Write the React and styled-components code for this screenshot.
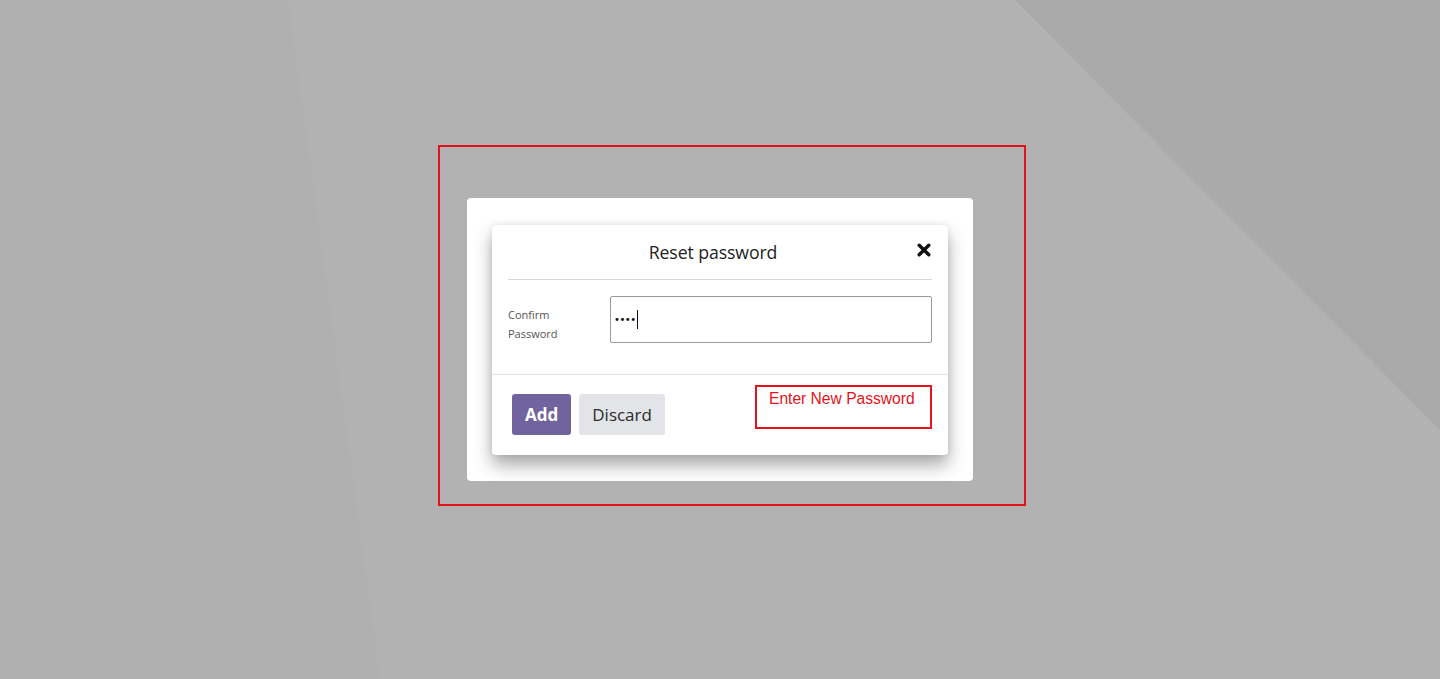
import React from 'react';
import styled, { createGlobalStyle } from 'styled-components';

const GlobalStyle = createGlobalStyle`
  html, body {
    margin: 0;
    padding: 0;
    height: 100%;
  }
  body {
    background: #b2b2b2;
    font-family: "Open Sans", "Noto Sans", sans-serif;
    overflow: hidden;
  }
`;

function App() {
  return (
    <Page>
      <GlobalStyle />
      <Highlight>
        <Card>
          <Modal>
            <Header>
              <Title>Reset password</Title>
              <CloseButton aria-label="Close">
                <svg width="14" height="14" viewBox="0 0 14 14">
                  <path
                    d="M2.2 2.2 L11.8 11.8 M11.8 2.2 L2.2 11.8"
                    stroke="#111"
                    strokeWidth="3.4"
                    strokeLinecap="round"
                  />
                </svg>
              </CloseButton>
            </Header>
            <Body>
              <Label>
                Confirm
                <br />
                Password
              </Label>
              <InputBox>
                <Dots>••••</Dots>
                <Caret />
              </InputBox>
            </Body>
            <Footer>
              <Button primary>Add</Button>
              <Button>Discard</Button>
              <Hint>Enter New Password</Hint>
            </Footer>
          </Modal>
        </Card>
      </Highlight>
    </Page>
  );
}

const Page = styled.div`
  position: relative;
  width: 1440px;
  height: 679px;
  padding: 145px 0 0 438px;
  box-sizing: border-box;
  background: #b2b2b2;

  &::before {
    content: '';
    position: absolute;
    inset: 0;
    background: #b0b0b0;
    clip-path: polygon(0 0, 288px 0, 380px 679px, 0 679px);
  }

  &::after {
    content: '';
    position: absolute;
    inset: 0;
    background: #aaaaaa;
    clip-path: polygon(1015px 0, 1440px 0, 1440px 430px);
  }
`;

const Highlight = styled.div`
  position: relative;
  z-index: 1;
  width: 588px;
  height: 361px;
  box-sizing: border-box;
  border: 2px solid #e4131b;
  padding: 51px 51px 0 27px;
`;

const Card = styled.div`
  background: #fff;
  border-radius: 4px;
  padding: 27px 25px 26px 25px;
`;

const Modal = styled.div`
  background: #fff;
  border-radius: 4px;
  box-shadow: 0 10px 18px rgba(0, 0, 0, 0.35), 0 0 6px rgba(0, 0, 0, 0.08);
  display: flex;
  flex-direction: column;
`;

const Header = styled.div`
  position: relative;
  margin: 0 16px;
  padding-right: 14px;
  height: 54px;
  border-bottom: 1px solid #d6d6d6;
  display: flex;
  align-items: center;
  justify-content: center;
`;

const Title = styled.h4`
  margin: 0;
  font-size: 17.7px;
  font-weight: 400;
  color: #222;
  letter-spacing: -0.1px;
`;

const CloseButton = styled.span`
  position: absolute;
  right: 1px;
  top: 18px;
  display: flex;
`;

const Body = styled.div`
  display: flex;
  align-items: flex-start;
  padding: 16px 16px 31px 16px;
  border-bottom: 1px solid #e4e4e4;
`;

const Label = styled.div`
  width: 102px;
  padding-top: 9px;
  font-size: 11px;
  line-height: 19px;
  color: #555;
`;

const InputBox = styled.div`
  flex: 1;
  height: 47px;
  box-sizing: border-box;
  border: 1px solid #9a9a9a;
  border-radius: 2px;
  display: flex;
  align-items: center;
  padding-left: 3px;
`;

const Dots = styled.span`
  font-family: "DejaVu Sans", sans-serif;
  font-size: 10px;
  letter-spacing: -0.5px;
  color: #111;
`;

const Caret = styled.span`
  display: inline-block;
  width: 1.5px;
  height: 19px;
  background: #111;
  margin-left: 1px;
`;

const Footer = styled.div`
  display: flex;
  align-items: flex-start;
  gap: 8px;
  padding: 10px 16px 20px 20px;
`;

const Button = styled.button`
  margin-top: 9px;
  height: 41px;
  padding: 0 13px;
  border: none;
  border-radius: 3px;
  font-family: "Open Sans", "Noto Sans", sans-serif;
  font-size: 17px;
  font-weight: ${(p) => (p.primary ? 700 : 400)};
  color: ${(p) => (p.primary ? '#fff' : '#2b2b2b')};
  background: ${(p) => (p.primary ? '#71639e' : '#e2e4e7')};
`;

const Hint = styled.div`
  margin-left: auto;
  width: 177px;
  height: 44px;
  box-sizing: border-box;
  border: 2px solid #e4131b;
  padding: 3px 0 0 12px;
  font-family: "Liberation Sans", Arial, sans-serif;
  font-size: 15.6px;
  color: #e4131b;
`;

export default App;
